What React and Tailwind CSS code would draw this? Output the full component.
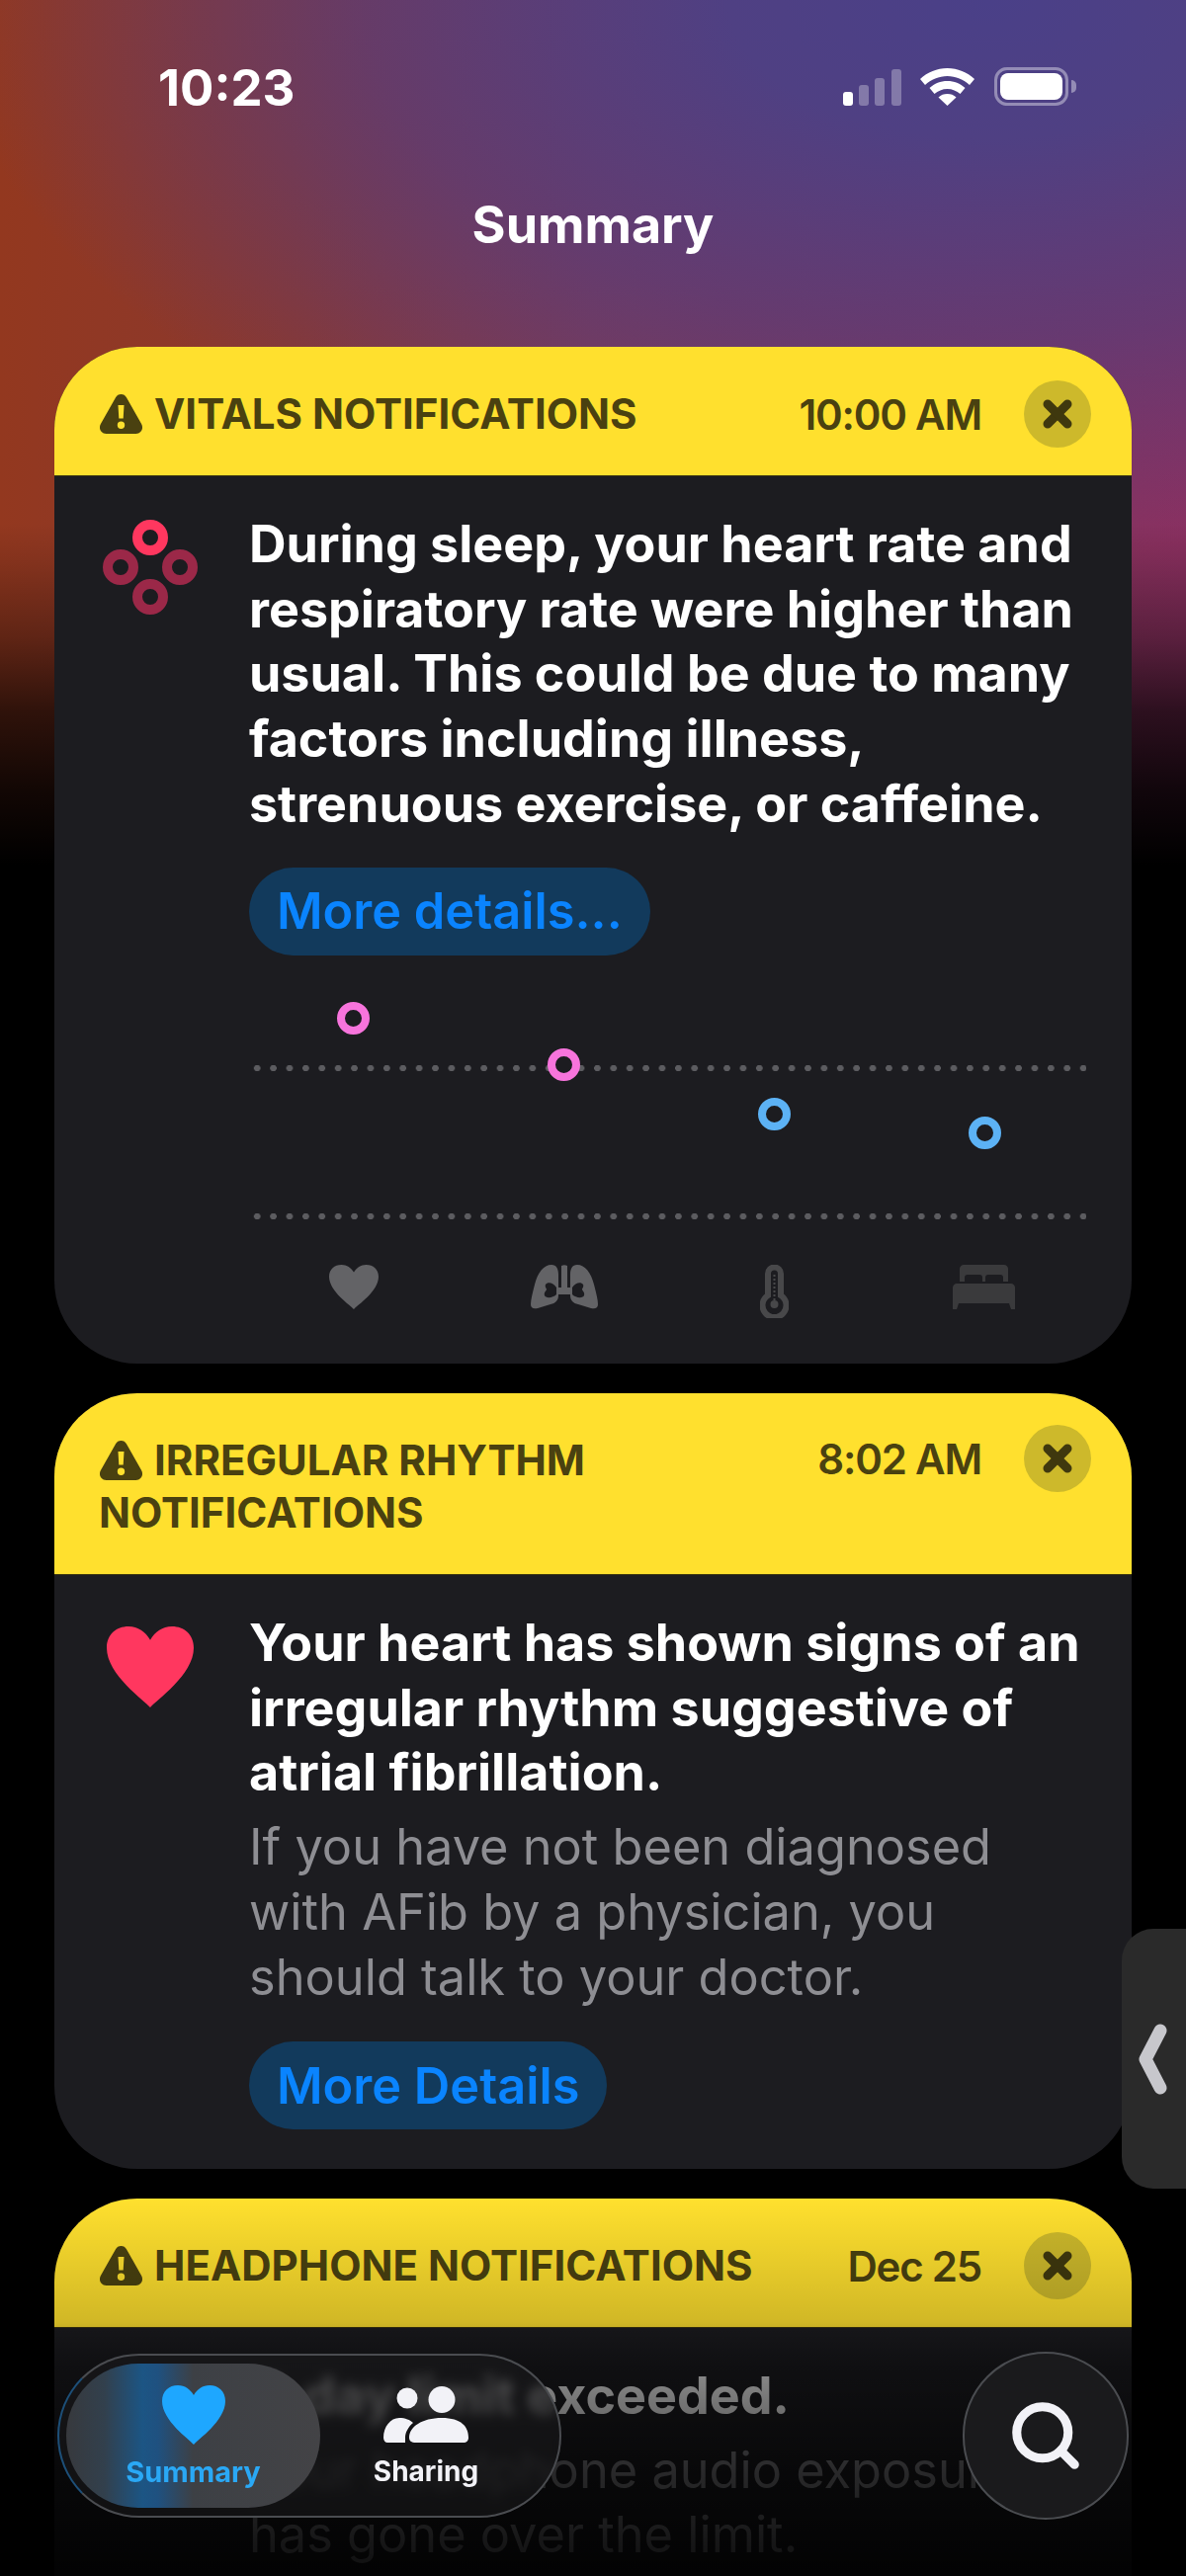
import React from 'react';
import { X, Search } from 'lucide-react';

const font = { fontFamily: 'Inter, "Noto Sans", sans-serif' };

const TriangleAlert = () => (
    <svg viewBox="0 0 44 40" className="w-[45px] h-[40px] shrink-0">
        <path
            fillRule="evenodd"
            fill="#4a4110"
            d="M22 0c2.400 0 4.300 1.200 5.600 3.400L42.600 30c2.600 4.600-.4 10-5.600 10H7c-5.200 0-8.200-5.400-5.600-10L16.400 3.400C17.700 1.200 19.600 0 22 0zM19 11l.8 13.500h4.400L25 11zM22 27.500a3.700 3.700 0 1 0 0 7.400 3.700 3.700 0 0 0 0-7.400z"
        />
    </svg>
);

const HEART = 'M32 60C28 55 0 36 0 16 0 6 7 0 16 0c7 0 12.500 4 16 10C35.500 4 41 0 48 0c9 0 16 6 16 16 0 20-28 39-32 44z';

const Header = ({ title, time, wrap }) => (
    <div className={`flex items-start bg-[#ffe02e] pl-[45px] pr-[41px] border-b border-[#3a3410] ${wrap ? 'h-[184px]' : 'h-[131px]'}`}>
        <div className="flex-1 text-[42px] leading-[53px] font-bold text-[#4a4110] pt-[41px]">
            {wrap ? (
                <>
                    <span className="inline-flex align-top items-center gap-[11px] h-[53px]"><TriangleAlert />IRREGULAR RHYTHM</span>
                    <br />
                    NOTIFICATIONS
                </>
            ) : (
                <span className="inline-flex items-center gap-[11px] h-[53px]"><TriangleAlert />{title}</span>
            )}
        </div>
        <div className={`flex items-center gap-[43px] ${wrap ? 'pt-[32px]' : 'pt-[34px]'}`}>
            <span className="text-[42px] leading-[53px] font-semibold text-[#4a4110] tracking-[-1.2px] whitespace-nowrap">{time}</span>
            <div className="w-[68px] h-[68px] rounded-full bg-[#cdb92b] flex items-center justify-center">
                <X size={40} strokeWidth={5.4} color="#3f380e" />
            </div>
        </div>
    </div>
);

const VitalsIcon = () => (
    <svg viewBox="0 0 96 96" className="w-[96px] h-[96px]">
        <circle cx="48" cy="18" r="13" fill="none" stroke="#ff375f" strokeWidth="10" />
        <circle cx="18" cy="48" r="13" fill="none" stroke="#9b2848" strokeWidth="10" />
        <circle cx="78" cy="48" r="13" fill="none" stroke="#9b2848" strokeWidth="10" />
        <circle cx="48" cy="78" r="13" fill="none" stroke="#9b2848" strokeWidth="10" />
    </svg>
);

const DotLine = () => (
    <div className="h-[6px] w-[847px] bg-[radial-gradient(circle,#5c5c60_3px,transparent_3.5px)] bg-[length:16.400px_6px]" />
);

const Ring = ({ color, className }) => (
    <div className={`absolute z-10 w-[33px] h-[33px] rounded-full border-[8px] bg-[#1c1c20] ${color} ${className}`} />
);

const VitalsChart = () => (
    <div className="mt-[47px]">
        <div className="relative h-[266px]">
            <Ring color="border-[#f774dc]" className="left-[89px] top-[0px]" />
            <Ring color="border-[#f774dc]" className="left-[302px] top-[47px]" />
            <Ring color="border-[#5cb2f5]" className="left-[515px] top-[97px]" />
            <Ring color="border-[#5cb2f5]" className="left-[728px] top-[116px]" />
            <div className="absolute top-[64px] left-0"><DotLine /></div>
            <div className="absolute top-[214px] left-0"><DotLine /></div>
        </div>
        <div className="grid grid-cols-4 w-[850px]">
            <div className="flex justify-center">
                <svg viewBox="0 0 64 60" preserveAspectRatio="none" className="w-[50px] h-[45px]"><path d={HEART} fill="#636366" /></svg>
            </div>
            <div className="flex justify-center">
                <svg viewBox="0 0 68 45" className="w-[68px] h-[45px]">
                    <path fill="#636366" d="M21 0c5 0 7 4 7 10v21c0 5-3 8-8 9L7 44c-4 1-7 0-7-4 0-5 2-12 4-20C7 8 13 0 21 0zM47 0c-5 0-7 4-7 10v21c0 5 3 8 8 9l13 4c4 1 7 0 7-4 0-5-2-12-4-20C61 8 55 0 47 0z" />
                    <path fill="#1c1c20" d="M26 23c-3-5-9-6-11-3-1 2 1 4 1 5s-3 3-2 6c1 3 8 3 12-1zM42 23c3-5 9-6 11-3 1 2-1 4-1 5s3 3 2 6c-1 3-8 3-12-1z" />
                    <path fill="#636366" d="M31 1c2-1 4-1 6 0v22h5v7H26v-7h5z" />
                </svg>
            </div>
            <div className="flex justify-center">
                <svg viewBox="0 0 29 54" className="w-[29px] h-[54px]">
                    <path fill="none" stroke="#48484a" strokeWidth="6" d="M8 31V9a6.500 6.500 0 0 1 13 0v22a12 12 0 1 1-13 0z" />
                    <circle cx="14.500" cy="40" r="4" fill="#48484a" />
                    <path stroke="#48484a" strokeWidth="2" strokeDasharray="2 2" d="M14.500 10v26" />
                </svg>
            </div>
            <div className="flex justify-center">
                <svg viewBox="0 0 63 45" className="w-[63px] h-[45px]">
                    <path fill="#3a3a3c" d="M7 4c0-2 2-4 4-4h41c2 0 4 2 4 4v13h-5v-4c0-2-1-3-3-3H36c-2 0-3 1-3 3v4h-3v-4c0-2-1-3-3-3H15c-2 0-3 1-3 3v4H7zM4 19h55c2 0 4 2 4 4v22h-4l-2-6H6l-2 6H0V23c0-2 2-4 4-4z" />
                </svg>
            </div>
        </div>
    </div>
);

const Pill = ({ children }) => (
    <div className="inline-flex items-center h-[89px] px-[28px] rounded-full bg-[#123a5c] text-[50.500px] font-semibold text-[#0a84ff]">
        {children}
    </div>
);

const StatusBar = () => (
    <div className="flex items-start justify-between h-[199px] pl-[160px] pr-[111px] pt-[60px]">
        <span className="text-[51px] leading-[58px] font-bold text-white">10:23</span>
        <div className="flex items-end gap-[19px] pt-[8px]">
            <svg viewBox="0 0 59 37" className="w-[59px] h-[37px]">
                <rect x="0" y="23" width="10" height="14" rx="3" fill="#fff" />
                <rect x="16" y="16" width="10" height="21" rx="3" fill="#fff" fillOpacity="0.3" />
                <rect x="32" y="9" width="10" height="28" rx="3" fill="#fff" fillOpacity="0.3" />
                <rect x="49" y="0" width="10" height="37" rx="3" fill="#fff" fillOpacity="0.3" />
            </svg>
            <svg viewBox="0 0 55 38" className="w-[55px] h-[38px]">
                <path fill="#fff" d="M27.500 0C38 0 47.500 4 55 11l-5 6C44 11.500 36 8 27.500 8S11 11.500 5 17l-5-6C7.500 4 17 0 27.500 0z" />
                <path fill="#fff" d="M27.500 13c7 0 13 2.500 18 7l-5 6c-3.500-3-8-5-13-5s-9.500 2-13 5l-5-6c5-4.500 11-7 18-7z" />
                <path fill="#fff" d="M27.500 26c3.500 0 6.500 1 9 3.500L27.500 38l-9-8.500c2.500-2.500 5.500-3.500 9-3.500z" />
            </svg>
            <div className="flex items-center gap-[3px] ml-[1px]">
                <div className="w-[75px] h-[39px] rounded-[13px] border-[3px] border-white/40 p-[3px]">
                    <div className="w-full h-full rounded-[8px] bg-white" />
                </div>
                <div className="w-[5px] h-[13px] rounded-r-full bg-white/40" />
            </div>
        </div>
    </div>
);

const BottomNav = () => (
    <>
        <div className="absolute left-[58px] top-[2382px] w-[510px] h-[166px] rounded-full border-2 border-[#4a4c50] border-l-[#1d4f78] bg-[#1c1c1e]/50 backdrop-blur-[6px] flex items-center pl-[7px] pr-[28px]">
            <div className="w-[257px] h-[146px] rounded-full bg-[linear-gradient(to_right,#37393d_0%,#32404d_15%,#1c5584_30%,#1f5180_36%,#3d4045_50%,#434346_100%)] flex flex-col items-center pt-[22px] shrink-0">
                <svg viewBox="0 0 64 60" className="w-[64px] h-[60px]">
                    <path fill="#1ea7ff" d={HEART} />
                </svg>
                <span className="text-[29px] leading-[34px] font-bold text-[#2aa8f5] mt-[11px]">Summary</span>
            </div>
            <div className="flex-1 flex flex-col items-center pt-[2px]">
                <svg viewBox="0 0 86 58" className="w-[86px] h-[58px]">
                    <circle cx="24" cy="12" r="10.500" fill="#f2f2f7" />
                    <circle cx="59" cy="13.500" r="13.500" fill="#f2f2f7" />
                    <path fill="#f2f2f7" d="M0 52c0-11 7-20 16-20 6 0 11 2 14 5-5 4-8 10-8 15v5H4c-2 0-4-2-4-5zM33 57c-5 0-7-2-7-5 0-11 13-20 33-20s27 9 27 20c0 3-2 5-5 5z" />
                </svg>
                <span className="text-[28px] leading-[34px] font-bold text-[#f2f2f7] mt-[11px]">Sharing</span>
            </div>
        </div>
        <div className="absolute left-[974px] top-[2380px] w-[168px] h-[170px] rounded-full border-2 border-[#4a4c50] bg-[#1a1a1c] flex items-center justify-center">
            <Search size={78} strokeWidth={2.800} color="#f2f2f7" />
        </div>
    </>
);

export default function App() {
    return (
        <div
            style={font}
            className="relative w-[1200px] h-[2607px] overflow-hidden bg-black bg-no-repeat bg-[linear-gradient(to_bottom,transparent_530px,rgba(0,0,0,0.1)_568px,rgba(0,0,0,0.35)_645px,rgba(0,0,0,0.68)_720px,rgba(0,0,0,0.88)_800px,#000_875px),radial-gradient(ellipse_1050px_560px_at_1000px_0px,#4a4088_0%,#4f4083_25%,rgba(90,60,120,0.75)_60%,transparent_100%),linear-gradient(to_right,#93381f_0%,#8a3830_25%,#833a50_50%,#8b3060_100%)]"
        >
            <StatusBar />
            <h1 className="text-center text-[52px] leading-[58px] font-bold text-white">Summary</h1>
            <div className="flex flex-col gap-[30px] px-[55px] mt-[94px]">
                {/* vitals */}
                <div className="rounded-[84px] overflow-hidden bg-[#1c1c20] h-[1029px]">
                    <Header title="VITALS NOTIFICATIONS" time="10:00 AM" />
                    <div className="flex">
                        <div className="w-[197px] pl-[49px] pt-[44px] shrink-0"><VitalsIcon /></div>
                        <div className="pt-[36px]">
                            <p className="text-[52px] leading-[65.700px] font-bold text-white whitespace-nowrap">
                                During sleep, your heart rate and<br />
                                respiratory rate were higher than<br />
                                usual. This could be due to many<br />
                                factors including illness,<br />
                                strenuous exercise, or caffeine.
                            </p>
                            <div className="mt-[31px]"><Pill>More details...</Pill></div>
                            <VitalsChart />
                        </div>
                    </div>
                </div>
                {/* irregular rhythm */}
                <div className="rounded-[84px] overflow-hidden bg-[#1c1c20] h-[785px]">
                    <Header wrap time="8:02 AM" />
                    <div className="flex">
                        <div className="w-[197px] pl-[53px] pt-[52px] shrink-0">
                            <svg viewBox="0 0 64 60" preserveAspectRatio="none" className="w-[88px] h-[82px]"><path d={HEART} fill="#ff375f" /></svg>
                        </div>
                        <div className="pt-[36px]">
                            <p className="text-[52px] leading-[65.700px] font-bold text-white whitespace-nowrap">
                                Your heart has shown signs of an<br />
                                irregular rhythm suggestive of<br />
                                atrial fibrillation.
                            </p>
                            <p className="text-[50.500px] leading-[65.700px] text-[#8e8e93] mt-[9px] whitespace-nowrap">
                                If you have not been diagnosed<br />
                                with AFib by a physician, you<br />
                                should talk to your doctor.
                            </p>
                            <div className="mt-[33px]"><Pill>More Details</Pill></div>
                        </div>
                    </div>
                </div>
                {/* headphone */}
                <div className="rounded-t-[84px] overflow-hidden bg-[#1c1c20] h-[420px]">
                    <Header title="HEADPHONE NOTIFICATIONS" time="Dec 25" />
                    <div className="pl-[197px] pt-[36px]">
                        <p className="text-[52px] leading-[65.700px] font-bold text-white whitespace-nowrap">7-day limit exceeded.</p>
                        <p className="text-[50.500px] leading-[65.700px] text-[#8e8e93] mt-[9px] whitespace-nowrap">
                            Your headphone audio exposure<br />
                            has gone over the limit.
                        </p>
                    </div>
                </div>
            </div>

            {/* fade under the tab bar */}
            <div className="absolute inset-x-0 top-[2225px] h-[382px] bg-[linear-gradient(to_bottom,transparent_0px,rgba(0,0,0,0.18)_125px,rgba(0,0,0,0.45)_170px,rgba(0,0,0,0.72)_280px,rgba(0,0,0,0.9)_382px)]" />

            {/* side handle */}
            <div className="absolute right-0 top-[1952px] w-[65px] h-[263px] rounded-l-[32px] bg-[#2a2a2a] flex items-center">
                <svg viewBox="0 0 30 72" className="w-[30px] h-[72px] ml-[16px]">
                    <path d="M23 7 L8 36 L23 65" fill="none" stroke="#c7c7cc" strokeWidth="13" strokeLinecap="round" strokeLinejoin="round" />
                </svg>
            </div>

            <BottomNav />
        </div>
    );
}
